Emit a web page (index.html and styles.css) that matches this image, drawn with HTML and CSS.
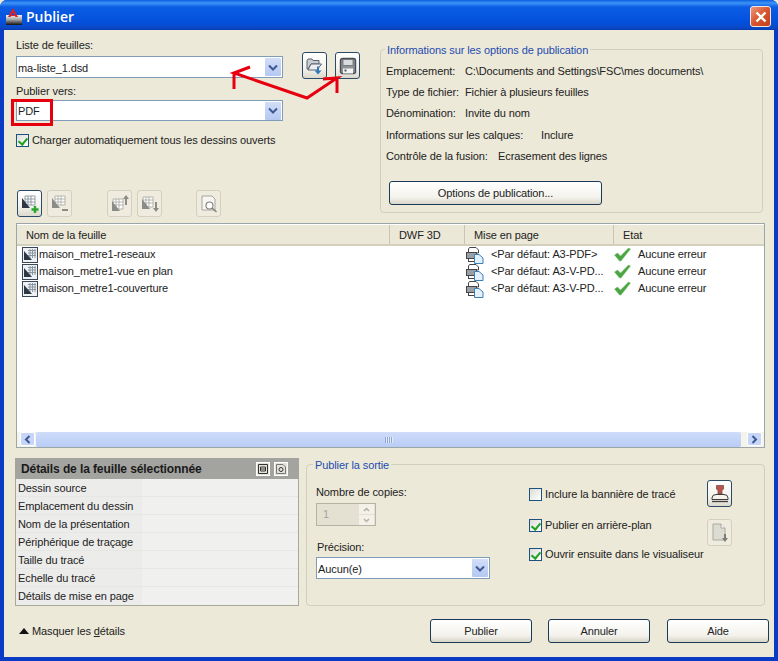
FILE: index.html
```html
<!doctype html>
<html lang="fr">
<head>
	<meta charset="UTF-8">
	<title>Publier</title>
	<link rel="stylesheet" href="styles.css">
</head>
<body>
	<svg class="defs" width="0" height="0">
		<defs>
			<linearGradient id="appfade" x1="0" y1="0" x2="0" y2="1">
				<stop offset="0" stop-color="#f2f2f2"/>
				<stop offset="0.45" stop-color="#a8a8a8"/>
				<stop offset="1" stop-color="#111"/>
			</linearGradient>
		</defs>
		<symbol id="sheet" viewBox="0 0 16 16">
			<rect x="0.5" y="0.5" width="15" height="15" fill="#eef1f4" stroke="#3a4856"/>
			<path d="M6 3.500H14M6 6H14M6 8.500H14M8 2V11M10.500 2V11M13 2V11" stroke="#8a96a2" fill="none"/>
			<path d="M2 4L10 13H2Z" fill="#2c3844"/>
		</symbol>
		<symbol id="printer" viewBox="0 0 18 18">
			<path d="M3.500 1.500H10L12.500 4V7H2.500V3Z" fill="#fff" stroke="#454545"/>
			<rect x="0.500" y="6.500" width="10" height="6" fill="#9aa0a6" stroke="#454545"/>
			<rect x="2.500" y="12.500" width="6" height="3" fill="#fff" stroke="#454545"/>
			<path d="M8.500 8.500H13L17 12V17.500H8.500Z" fill="#e4f0fb" stroke="#3a80bb"/>
		</symbol>
		<symbol id="tick" viewBox="0 0 17 15">
			<path d="M0.500 8L3.500 6L6.500 9L14.500 1L16.500 2L7 14H5.500Z" fill="#4ba543" stroke="#7cc476" stroke-width="0.500"/>
		</symbol>
	</svg>

	<div class="window">
		<div class="titlebar">
			<svg class="app-icon" width="16" height="17" viewBox="0 0 16 17">
				<rect x="0" y="7" width="16" height="10" fill="url(#appfade)"/>
				<path d="M7 0L2 9H4.500L7 4.500L9.500 9H12Z" fill="#d8232a"/>
				<path d="M3.500 7.500H10.500" stroke="#d8232a"/>
			</svg>
			<span class="title">Publier</span>
			<div class="close">
				<svg width="12" height="12" viewBox="0 0 12 12"><path d="M1.500 1.500L10.500 10.500M10.500 1.500L1.500 10.500" stroke="#fff" stroke-width="2.400"/></svg>
			</div>
		</div>

		<div class="content">
			<div class="top">
				<div class="left">
					<div class="file-row">
						<div class="sheet-list">
							<label class="lbl">Liste de feuilles:</label>
							<div class="combo combo-one"><span>ma-liste_1.dsd</span><i class="combo-arrow"><svg width="10" height="7" viewBox="0 0 10 7"><path d="M1 1.500L5 5.500L9 1.500" fill="none" stroke="#3b5a94" stroke-width="2"/></svg></i></div>
							<label class="lbl lbl-vers">Publier vers:</label>
							<div class="combo combo-two"><span>PDF</span><i class="combo-arrow"><svg width="10" height="7" viewBox="0 0 10 7"><path d="M1 1.500L5 5.500L9 1.500" fill="none" stroke="#3b5a94" stroke-width="2"/></svg></i></div>
						</div>
						<button class="tool tool-file">
							<svg width="20" height="20" viewBox="0 0 20 20">
								<path d="M2 4.500L3 3H7L8 4.500H14V8H6L3 13H2Z" fill="#c9ced3" stroke="#5a646e"/>
								<path d="M3 14H12L16.500 8H6Z" fill="#eceeef" stroke="#5a646e"/>
								<path d="M12 10.500V14.500H9.500L13 18.500L16.500 14.500H14V10.500Z" fill="#2c79bd"/>
							</svg>
						</button>
						<button class="tool tool-file tool-save">
							<svg width="18" height="18" viewBox="0 0 18 18">
								<rect x="1.500" y="1.500" width="15" height="15" rx="2" fill="#8d9298" stroke="#4a4f55" stroke-width="1.400"/>
								<rect x="4" y="2.500" width="10" height="6" fill="#d9dbde" stroke="#5c6167" stroke-width="0.700"/>
								<rect x="4" y="11.500" width="10" height="5" fill="#f4f4f4"/>
								<rect x="5.500" y="12.500" width="2" height="2" fill="#555"/>
							</svg>
						</button>
					</div>
					<label class="check check-auto"><i class="box on"></i>Charger automatiquement tous les dessins ouverts</label>
					<div class="toolbar">
						<button class="tool">
							<svg width="20" height="20" viewBox="0 0 20 20"><path d="M5 2H15V11H5ZM5 5H15M5 8H15M8 2V11M11 2V11" fill="#fff" stroke="#7c8894" stroke-width="0.800"/><path d="M2 4L10 14H2Z" fill="#2c3844"/><path d="M15 12V19M11.500 15.500H18.500" stroke="#2aa52e" stroke-width="2.400"/></svg>
						</button>
						<button class="tool off">
							<svg width="20" height="20" viewBox="0 0 20 20"><path d="M5 2H15V11H5ZM5 5H15M5 8H15M8 2V11M11 2V11" fill="#fff" stroke="#a5a59f" stroke-width="0.800"/><path d="M2 4L10 14H2Z" fill="#8b8b87"/><path d="M12 16H18" stroke="#8b8b87" stroke-width="2"/></svg>
						</button>
						<button class="tool off gap-left">
							<svg width="20" height="20" viewBox="0 0 20 20"><path d="M3 5H13V15H3ZM3 8H13M3 11H13M6 5V15M9 5V15" fill="#fff" stroke="#a5a59f" stroke-width="0.800"/><path d="M2 7L10 17H2Z" fill="#8b8b87"/><path d="M16 1L19 5H17V11H15V5H13Z" fill="#8b8b87"/></svg>
						</button>
						<button class="tool off">
							<svg width="20" height="20" viewBox="0 0 20 20"><path d="M3 3H13V13H3ZM3 6H13M3 9H13M6 3V13M9 3V13" fill="#fff" stroke="#a5a59f" stroke-width="0.800"/><path d="M2 5L10 15H2Z" fill="#8b8b87"/><path d="M16 18L19 14H17V8H15V14H13Z" fill="#8b8b87"/></svg>
						</button>
						<button class="tool off gap-preview">
							<svg width="20" height="20" viewBox="0 0 20 20"><path d="M3 2H13L16 5V16H3Z" fill="#f7f6f0" stroke="#a5a59f"/><circle cx="10.500" cy="11.500" r="3.500" fill="#fff" stroke="#7f7f7b" stroke-width="1.100"/><path d="M13 14L17.500 18" stroke="#7f7f7b" stroke-width="1.500"/></svg>
						</button>
					</div>
				</div>

				<fieldset class="group info">
					<legend>Informations sur les options de publication</legend>
					<div class="info-row"><span class="key">Emplacement:</span>C:\Documents and Settings\FSC\mes documents\</div>
					<div class="info-row"><span class="key">Type de fichier:</span>Fichier à plusieurs feuilles</div>
					<div class="info-row"><span class="key">Dénomination:</span>Invite du nom</div>
					<div class="info-row row-calques"><span class="key key-calques">Informations sur les calques:</span>Inclure</div>
					<div class="info-row"><span class="key key-fusion">Contrôle de la fusion:</span>Ecrasement des lignes</div>
					<button class="btn btn-options">Options de publication...</button>
				</fieldset>
			</div>

			<div class="sheets">
				<div class="sheets-head">
					<div>Nom de la feuille</div>
					<div>DWF 3D</div>
					<div>Mise en page</div>
					<div>Etat</div>
				</div>
				<div class="sheets-body">
					<div class="sheet-row">
						<div class="name"><svg width="16" height="16"><use href="#sheet"/></svg>maison_metre1-reseaux</div>
						<div></div>
						<div class="setup"><svg width="18" height="18"><use href="#printer"/></svg>&lt;Par défaut: A3-PDF&gt;</div>
						<div class="state"><svg width="17" height="15"><use href="#tick"/></svg>Aucune erreur</div>
					</div>
					<div class="sheet-row">
						<div class="name"><svg width="16" height="16"><use href="#sheet"/></svg>maison_metre1-vue en plan</div>
						<div></div>
						<div class="setup"><svg width="18" height="18"><use href="#printer"/></svg>&lt;Par défaut: A3-V-PD...</div>
						<div class="state"><svg width="17" height="15"><use href="#tick"/></svg>Aucune erreur</div>
					</div>
					<div class="sheet-row">
						<div class="name"><svg width="16" height="16"><use href="#sheet"/></svg>maison_metre1-couverture</div>
						<div></div>
						<div class="setup"><svg width="18" height="18"><use href="#printer"/></svg>&lt;Par défaut: A3-V-PD...</div>
						<div class="state"><svg width="17" height="15"><use href="#tick"/></svg>Aucune erreur</div>
					</div>
				</div>
				<div class="scrollbar">
					<i class="scroll-btn"><svg width="7" height="9" viewBox="0 0 7 9"><path d="M5.500 1L2 4.500L5.500 8" fill="none" stroke="#3b5a94" stroke-width="2"/></svg></i>
					<div class="thumb"><span class="grip"></span></div>
					<i class="scroll-btn"><svg width="7" height="9" viewBox="0 0 7 9"><path d="M1.500 1L5 4.500L1.500 8" fill="none" stroke="#3b5a94" stroke-width="2"/></svg></i>
				</div>
			</div>

			<div class="bottom">
				<div class="details">
					<div class="details-head">
						<span>Détails de la feuille sélectionnée</span>
						<i class="mini"><svg width="10" height="10" viewBox="0 0 10 10"><path d="M0.500 0.500H9.500V9.500H0.500ZM2.500 3H7.500V7H2.500ZM2.500 5H7.500" fill="none" stroke="#333"/></svg></i>
						<i class="mini"><svg width="10" height="10" viewBox="0 0 10 10"><path d="M0.500 0.500H7L9.500 3V9.500H0.500Z" fill="none" stroke="#777"/><circle cx="5" cy="5.500" r="2" fill="none" stroke="#333"/></svg></i>
					</div>
					<div class="detail-row"><div>Dessin source</div><div></div></div>
					<div class="detail-row"><div>Emplacement du dessin</div><div></div></div>
					<div class="detail-row"><div>Nom de la présentation</div><div></div></div>
					<div class="detail-row"><div>Périphérique de traçage</div><div></div></div>
					<div class="detail-row"><div>Taille du tracé</div><div></div></div>
					<div class="detail-row"><div>Echelle du tracé</div><div></div></div>
					<div class="detail-row"><div>Détails de mise en page</div><div></div></div>
				</div>

				<fieldset class="group output">
					<legend>Publier la sortie</legend>
					<div class="output-left">
						<label class="lbl">Nombre de copies:</label>
						<div class="spinner">
							<span>1</span>
							<div class="spin-btns">
								<i><svg width="7" height="5" viewBox="0 0 7 5"><path d="M1 4L3.500 1.500L6 4" fill="none" stroke="#b5b2a6" stroke-width="1.500"/></svg></i>
								<i><svg width="7" height="5" viewBox="0 0 7 5"><path d="M1 1L3.500 3.500L6 1" fill="none" stroke="#b5b2a6" stroke-width="1.500"/></svg></i>
							</div>
						</div>
						<label class="lbl lbl-precision">Précision:</label>
						<div class="combo combo-precision"><span>Aucun(e)</span><i class="combo-arrow"><svg width="10" height="7" viewBox="0 0 10 7"><path d="M1 1.500L5 5.500L9 1.500" fill="none" stroke="#3b5a94" stroke-width="2"/></svg></i></div>
					</div>
					<div class="output-checks">
						<label class="check check-banner"><i class="box"></i>Inclure la bannière de tracé</label>
						<label class="check check-back"><i class="box on"></i>Publier en arrière-plan</label>
						<label class="check check-open"><i class="box on"></i>Ouvrir ensuite dans le visualiseur</label>
					</div>
					<div class="output-tools">
						<button class="tool">
							<svg width="20" height="20" viewBox="0 0 20 20"><path d="M6.500 1.500H13.500V5L12 6.500V10H8V6.500L6.500 5Z" fill="#b4574f" stroke="#7a3a34" stroke-width="0.700"/><path d="M2 14Q2 10.500 6 10.500H14Q18 10.500 18 14V15.500H2Z" fill="#f4f2ea" stroke="#3c3c3c"/><path d="M2 17.500H18" stroke="#3c3c3c" stroke-width="1.300"/></svg>
						</button>
						<button class="tool off tool-down">
							<svg width="20" height="20" viewBox="0 0 20 20"><path d="M3 1H11L15 5V17H3Z" fill="#dddcd3" stroke="#a8a79e"/><path d="M11 1V5H15" fill="#fff" stroke="#a8a79e"/><path d="M14 11V15H12L15 19L18 15H16V11Z" fill="#7b7b78"/></svg>
						</button>
					</div>
				</fieldset>
			</div>

			<div class="footer">
				<div class="toggle"><i class="up"></i><span>Masquer les <u>d</u>étails</span></div>
				<div class="actions">
					<button class="btn">Publier</button>
					<button class="btn">Annuler</button>
					<button class="btn btn-help">Aide</button>
				</div>
			</div>
		</div>

		<!-- annotations rouges par dessus le dialogue -->
		<svg class="marks" width="778" height="661" viewBox="0 0 778 661">
			<path d="M250 67L234 73L307 98L337 78L323 79M234 73V89M337 78V93" fill="none" stroke="#e6000f" stroke-width="3"/>
			<rect x="12.500" y="100.500" width="39" height="24" fill="none" stroke="#e6000f" stroke-width="3"/>
		</svg>
	</div>
</body>
</html>
```

FILE: styles.css
```css
*{
	padding: 0;
	margin: 0;
	box-sizing: border-box;
}
body{
	width: 778px;
	height: 661px;
	overflow: hidden;
	font-family: "Liberation Sans", Arial, sans-serif;
	font-size: 11px;
	letter-spacing: -0.1px;
	line-height: 13px;
	color: #222;
	background: #ece9d8;
}
i{
	font-style: normal;
}
.defs{
	display: block;
	height: 0;
}
.window{
	position: relative;
	width: 778px;
	height: 661px;
	display: flex;
	flex-direction: column;
	background: #0a3bc4;
	border-radius: 7px 7px 0 0;
}
/*---------------------titlebar------------------------------------------------*/
.titlebar{
	height: 30px;
	flex: none;
	display: flex;
	align-items: center;
	padding: 3px 7px 0 6px;
	border-radius: 7px 7px 0 0;
	background: linear-gradient(#0a5fe0 0, #3d94f6 3px, #0b5de4 7px, #0450dd 22px, #0a48c4 28px, #0a3bb0 30px);
}
.app-icon{
	flex: none;
}
.title{
	flex: 1;
	margin-left: 4px;
	font-family: "Open Sans", sans-serif;
	font-weight: 600;
	font-size: 14px;
	letter-spacing: 0;
	color: #fff;
}
.close{
	width: 21px;
	height: 21px;
	display: flex;
	align-items: center;
	justify-content: center;
	border: 1px solid #f2e6df;
	border-radius: 3px;
	background: linear-gradient(135deg, #e99a80, #d9542d 50%, #c2401c);
}
/*---------------------content-------------------------------------------------*/
.content{
	flex: 1;
	margin: 0 4px 4px;
	padding: 0 9px 0 12px;
	background: #ece9d8;
}
.top{
	height: 193px;
	display: flex;
}
.left{
	width: 364px;
	flex: none;
}
.file-row{
	display: flex;
}
.sheet-list{
	width: 267px;
	flex: none;
	padding-top: 9px;
}
.lbl{
	display: block;
}
.lbl-vers{
	margin-top: 7px;
}
.combo{
	height: 22px;
	margin-top: 4px;
	display: flex;
	align-items: center;
	justify-content: space-between;
	padding: 0 1px;
	border: 1px solid #7f9db9;
	background: #fff;
}
.combo span{
	padding-top: 2px;
}
.combo-two{
	height: 21px;
	margin-top: 2px;
}
.combo-arrow{
	width: 16px;
	height: 18px;
	display: flex;
	align-items: center;
	justify-content: center;
	border-radius: 1px;
	background: linear-gradient(#d2def8, #b4c8f2);
}
.tool{
	width: 25px;
	height: 27px;
	display: flex;
	align-items: center;
	justify-content: center;
	flex: none;
	border: 1px solid #2b4a68;
	border-radius: 3px;
	background: linear-gradient(#fff, #f4f3ee 60%, #dcd9cc);
}
.tool.off{
	border-color: #d3d0c2;
	background: #efecdf;
}
.tool-file{
	margin: 22px 0 0 19px;
}
.tool-save{
	margin-left: 8px;
}
.check{
	display: flex;
	align-items: center;
	height: 13px;
	white-space: nowrap;
}
.box{
	width: 13px;
	height: 13px;
	flex: none;
	margin-right: 3px;
	border: 1px solid #1c5180;
	background: linear-gradient(135deg, #dcdcd7, #fff);
	position: relative;
}
.box.on::after{
	content: "";
	position: absolute;
	left: 3px;
	top: 1px;
	width: 4px;
	height: 7px;
	border: solid #21a121;
	border-width: 0 2px 2px 0;
	transform: rotate(40deg);
}
.check-auto{
	margin-top: 13px;
}
.toolbar{
	display: flex;
	margin-top: 43px;
	margin-left: 1px;
	gap: 5px;
}
.gap-left{
	margin-left: 30px;
}
.gap-preview{
	margin-left: 29px;
}
/*---------------------groupes-------------------------------------------------*/
.group{
	border: 1px solid #d0d0bf;
	border-radius: 4px;
}
.group legend{
	padding: 2px 2px 0;
	color: #1f4bb0;
}
.info{
	width: 383px;
	height: 171px;
	margin-top: 12px;
	padding: 8px 5px 0 5px;
}
.info legend{
	margin-left: -1px;
}
.info-row{
	display: flex;
	height: 21px;
	line-height: 13px;
	white-space: nowrap;
}
.row-calques{
	height: 22px;
	padding-top: 1px;
}
.key{
	width: 79px;
	flex: none;
}
.key-calques{
	width: 155px;
}
.key-fusion{
	width: 112px;
}
.btn{
	width: 102px;
	height: 24px;
	flex: none;
	border: 1px solid #1b3a57;
	border-radius: 3px;
	font-family: inherit;
	font-size: 11px;
	letter-spacing: -0.1px;
	color: #222;
	background: linear-gradient(#fff, #f3f2ec 70%, #d9d6c8);
}
.btn-options{
	display: block;
	width: 213px;
	margin: 10px 0 0 3px;
}
/*---------------------liste des feuilles--------------------------------------*/
.sheets{
	height: 225px;
	display: flex;
	flex-direction: column;
	border: 1px solid #9aa6a8;
	background: #fff;
}
.sheets-head,
.sheet-row{
	display: grid;
	grid-template-columns: 373px 75px 149px 1fr;
}
.sheets-head{
	height: 21px;
	flex: none;
	margin-top: 1px;
	background: #ebe8d7;
	border-bottom: 2px solid #d4d0be;
}
.sheets-head div{
	padding: 4px 0 0 9px;
	border-right: 1px solid #c8c5b2;
}
.sheets-head div:last-child{
	border-right: 0;
}
.sheets-body{
	flex: 1;
}
.sheet-row{
	height: 17px;
	grid-template-rows: 17px;
}
.sheet-row div{
	display: flex;
	align-items: center;
	white-space: nowrap;
}
.name{
	padding-left: 5px;
}
.name svg{
	margin-right: 1px;
}
.setup{
	padding-left: 1px;
}
.setup svg{
	margin-right: 7px;
}
.state svg{
	margin-right: 7px;
}
.scrollbar{
	height: 15px;
	flex: none;
	display: flex;
	padding: 0 2px 0 3px;
	gap: 1px;
	background: #f4f3ec;
}
.scroll-btn{
	width: 15px;
	height: 14px;
	flex: none;
	display: flex;
	align-items: center;
	justify-content: center;
	border: 1px solid #fff;
	border-radius: 2px;
	background: #c6d5f8;
}
.thumb{
	flex: 1;
	display: flex;
	align-items: center;
	justify-content: center;
	border-radius: 2px;
	background: linear-gradient(#cfdcfa, #b9ccf6);
	margin-right: 5px;
}
.grip{
	width: 8px;
	height: 6px;
	background: repeating-linear-gradient(90deg, #8ea6d8 0, #8ea6d8 1px, #e4ebfb 1px, #e4ebfb 2px);
}
/*---------------------bas du dialogue-----------------------------------------*/
.bottom{
	display: flex;
	margin: 10px 0 0 -1px;
	height: 148px;
	gap: 7px;
}
.details{
	width: 284px;
	flex: none;
	border: 1px solid #a9a99a;
	border-top: 0;
	background: #f0f0ef;
}
.details-head{
	height: 21px;
	display: flex;
	align-items: center;
	padding: 0 11px 0 6px;
	gap: 4px;
	margin: 0 -1px;
	background: #a3a3a0;
	color: #1a1a1a;
}
.details-head span{
	flex: 1;
	padding-top: 2px;
	font-size: 12px;
	font-weight: 700;
}
.mini{
	width: 14px;
	height: 14px;
	display: flex;
	align-items: center;
	justify-content: center;
	border: 1px solid #fff;
	background: #e6e4da;
}
.detail-row{
	display: grid;
	grid-template-columns: 126px 1fr;
	height: 18px;
	border-bottom: 1px solid #e6e6e4;
}
.detail-row:last-child{
	border-bottom: 0;
}
.detail-row div{
	padding: 3px 0 0 2px;
	white-space: nowrap;
}
.detail-row div:first-child{
	background: #ececeb;
}
.output{
	width: 459px;
	height: 149px;
	margin-top: -1px;
	display: flex;
	padding-left: 9px;
}
.output legend{
	margin-left: -3px;
}
.output-left{
	width: 213px;
	flex: none;
	padding-top: 14px;
}
.spinner{
	width: 60px;
	height: 23px;
	margin-top: 4px;
	display: flex;
	align-items: center;
	justify-content: space-between;
	padding-left: 6px;
	border: 1px solid #b5b2a6;
	background: #e4e1d3;
	color: #a6a498;
}
.spin-btns{
	display: flex;
	flex-direction: column;
	gap: 1px;
	padding-right: 1px;
}
.spin-btns i{
	width: 15px;
	height: 10px;
	display: flex;
	align-items: center;
	justify-content: center;
	background: #f3f1e8;
}
.lbl-precision{
	margin: 15px 0 0 1px;
}
.combo-precision{
	width: 174px;
	margin-top: 3px;
}
.output-checks{
	width: 178px;
	flex: none;
}
.check-banner{
	margin-top: 16px;
}
.check-back{
	margin-top: 18px;
}
.check-open{
	margin-top: 16px;
}
.output-tools{
	flex: none;
	padding-top: 8px;
}
.tool-down{
	margin-top: 12px;
}
.footer{
	display: flex;
	align-items: center;
	justify-content: space-between;
	padding-top: 13px;
	margin-right: -4px;
}
.toggle{
	display: flex;
	align-items: center;
	margin-left: 3px;
}
.up{
	width: 0;
	height: 0;
	margin-right: 3px;
	border-left: 5px solid transparent;
	border-right: 5px solid transparent;
	border-bottom: 6px solid #111;
}
.actions{
	display: flex;
	gap: 16px;
}
.btn-help{
	margin-left: 1px;
}
.marks{
	position: absolute;
	left: 0;
	top: 0;
	pointer-events: none;
}
```
